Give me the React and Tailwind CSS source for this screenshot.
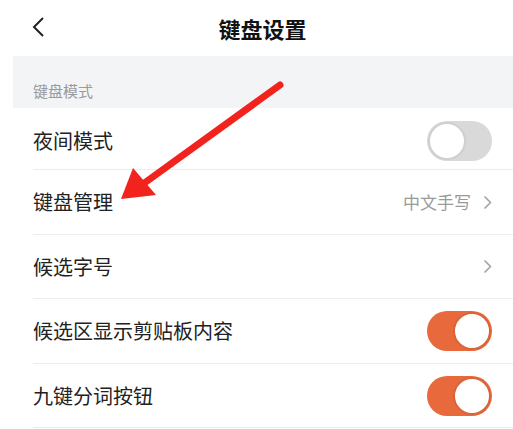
import React from "react";

function Toggle({ on }) {
  return on ? (
    <div className="flex h-[40px] w-[65px] items-center justify-end rounded-full bg-[#e86a3c] pr-[1px]">
      <div className="h-[38px] w-[38px] rounded-full border-[2px] border-[#d9643a] bg-white" />
    </div>
  ) : (
    <div className="flex h-[40px] w-[65px] items-center justify-start rounded-full bg-[#d9d9d9] pl-[1px]">
      <div className="h-[38px] w-[38px] rounded-full border-[2px] border-[#cfcfcf] bg-white" />
    </div>
  );
}

function Chevron() {
  return (
    <svg width="9" height="15" viewBox="0 0 9 15" className="ml-[12px]">
      <path d="M1.5 1.5 L7.5 7.5 L1.5 13.5" fill="none" stroke="#a0a0a0" strokeWidth="1.5" />
    </svg>
  );
}

function Row({ label, h, right }) {
  return (
    <div className={`ml-[33px] flex items-center justify-between border-b border-[#ececec] pr-[21px] ${h}`}>
      <span className="text-[20px] text-[#222]">{label}</span>
      {right}
    </div>
  );
}

export default function App() {
  return (
    <div
      className="relative h-[429px] w-[513px] overflow-hidden bg-white"
      style={{ fontFamily: '"Noto Sans CJK SC", "Noto Sans", sans-serif' }}
    >
      <div className="relative flex h-[56px] items-center justify-center">
        <svg width="14" height="22" viewBox="0 0 14 22" className="absolute left-[32px] top-[16px]">
          <path d="M11 2 L2 11 L11 20" fill="none" stroke="#222" strokeWidth="2" />
        </svg>
        <span className="ml-[12px] text-[22px] font-bold text-[#111]">键盘设置</span>
      </div>
      <div className="ml-[13px] flex h-[52px] items-center bg-[#f3f4f6] pl-[20px] pt-[18px]">
        <span className="text-[15px] text-[#9a9a9a]">键盘模式</span>
      </div>
      <Row label="夜间模式" h="h-[62px] pt-[4px]" right={<Toggle on={false} />} />
      <Row
        label="键盘管理"
        h="h-[65px]"
        right={
          <div className="flex items-center">
            <span className="text-[17px] text-[#9a9a9a]">中文手写</span>
            <Chevron />
          </div>
        }
      />
      <Row label="候选字号" h="h-[64px]" right={<Chevron />} />
      <Row label="候选区显示剪贴板内容" h="h-[65px]" right={<Toggle on />} />
      <Row label="九键分词按钮" h="h-[64px]" right={<Toggle on />} />

      <svg className="pointer-events-none absolute left-0 top-0" width="513" height="429" viewBox="0 0 513 429">
        <path d="M280 85 L143 184" stroke="#f2231c" strokeWidth="7" strokeLinecap="round" fill="none" />
        <polygon points="121,199 133,168 156,195" fill="#f2231c" />
      </svg>
    </div>
  );
}
